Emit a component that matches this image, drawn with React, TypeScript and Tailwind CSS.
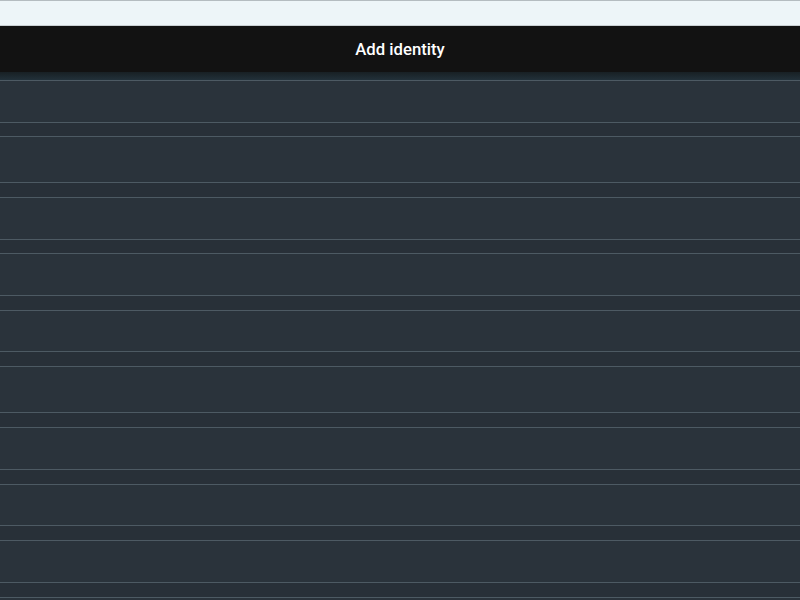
const rows = [
  { h: "h-[41px]", gap: "mt-[13px]" },
  { h: "h-[45px]", gap: "mt-[13px]" },
  { h: "h-[41px]", gap: "mt-[14px]" },
  { h: "h-[41px]", gap: "mt-[13px]" },
  { h: "h-[40px]", gap: "mt-[14px]" },
  { h: "h-[45px]", gap: "mt-[14px]" },
  { h: "h-[41px]", gap: "mt-[14px]" },
  { h: "h-[40px]", gap: "mt-[14px]" },
  { h: "h-[41px]", gap: "mt-[14px]" },
  { h: "h-[41px]", gap: "mt-[14px]" },
]

const App = () => {
  return (
    <div className="w-[800px] h-[600px] overflow-hidden bg-[#283038] flex flex-col" style={{ fontFamily: "Roboto, 'Noto Sans', sans-serif" }}>
      <div className="h-[26px] shrink-0 bg-[#edf5f8] border-t border-[#b4bcc0] border-b border-b-[#c9d0d3]" />
      <div className="h-[46px] shrink-0 bg-[#121212] flex items-center justify-center pt-[2px]">
        <span className="text-white text-[16.7px] font-medium">Add identity</span>
      </div>
      <div className="h-[8px] shrink-0 bg-gradient-to-b from-[#182024] to-[#22313a]" />
      <ul className="list-none flex flex-col">
        {rows.map((row, i) => (
          <li
            key={i}
            className={`${i === 0 ? "" : row.gap} ${row.h} box-content shrink-0 bg-[#2a333b] border-y border-[#4d5a63]`}
          />
        ))}
      </ul>
    </div>
  )
}

export default App
